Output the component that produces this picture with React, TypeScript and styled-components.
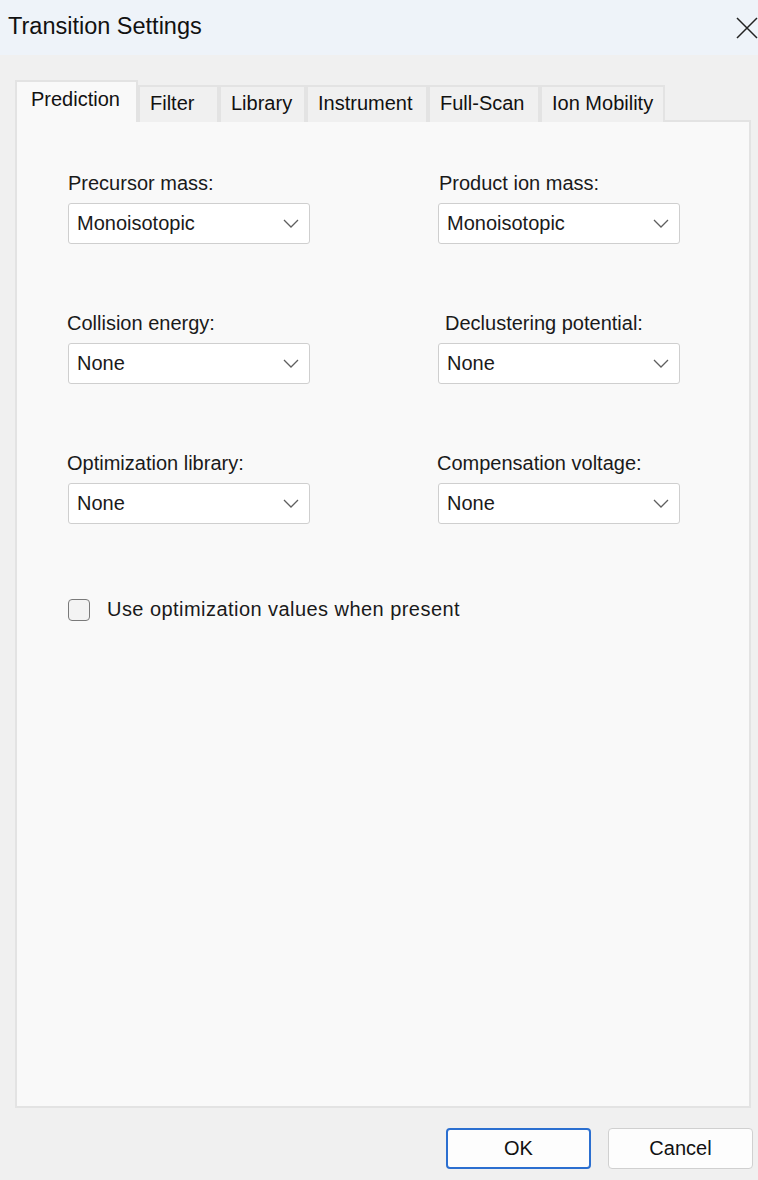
import styled, { createGlobalStyle } from 'styled-components';

const GlobalStyle = createGlobalStyle`
	html, body {
		margin: 0;
		padding: 0;
		background: #f0f0f0;
	}
	body {
		font-family: "Liberation Sans", Arial, sans-serif;
		color: #1a1a1a;
	}
`

const tabs = [
	{label: 'Prediction', width: 123},
	{label: 'Filter', width: 81},
	{label: 'Library', width: 87},
	{label: 'Instrument', width: 122},
	{label: 'Full-Scan', width: 112},
	{label: 'Ion Mobility', width: 125},
]

const fields = [
	{label: 'Precursor mass:', value: 'Monoisotopic', shift: 0},
	{label: 'Product ion mass:', value: 'Monoisotopic', shift: 1},
	{label: 'Collision energy:', value: 'None', shift: -1},
	{label: 'Declustering potential:', value: 'None', shift: 7},
	{label: 'Optimization library:', value: 'None', shift: -1},
	{label: 'Compensation voltage:', value: 'None', shift: -1},
]

const Window = styled.div`
	width: 758px;
	height: 1180px;
	display: flex;
	flex-direction: column;
	background: #f0f0f0;
	overflow: hidden;
`

const TitleBar = styled.div`
	height: 55px;
	flex: none;
	display: flex;
	align-items: center;
	justify-content: space-between;
	padding: 0 0 2px 8px;
	box-sizing: border-box;
	background: #eef3f9;
`

const Title = styled.span`
	font-size: 23.5px;
	color: #111;
`

const CloseButton = styled.button`
	width: 40px;
	height: 55px;
	border: none;
	background: transparent;
	padding: 0 0 0 18px;
	display: flex;
	align-items: center;
	margin-top: 2px;
`

const Body = styled.div`
	flex: 1;
	display: flex;
	flex-direction: column;
	padding: 25px 7px 0 15px;
	min-height: 0;
`

const TabStrip = styled.div`
	display: flex;
	align-items: flex-end;
	height: 42px;
	margin-bottom: -2px;
	position: relative;
	z-index: 1;
`

const Tab = styled.div<{ $active?: boolean; $width: number }>`
	box-sizing: border-box;
	width: ${p => p.$width}px;
	height: ${p => (p.$active ? 42 : 37)}px;
	border: 2px solid #e3e3e3;
	border-bottom: none;
	background: ${p => (p.$active ? '#f9f9f9' : '#f0f0f0')};
	font-size: 20px;
	padding: ${p => (p.$active ? '6px 0 0 14px' : '5px 0 0 10px')};
	white-space: nowrap;
	color: #111;
`

const Panel = styled.div`
	flex: 1;
	background: #f9f9f9;
	border: 2px solid #e3e3e3;
	padding: 50px 0 0 51px;
`

const FieldGrid = styled.div`
	display: grid;
	grid-template-columns: 242px 242px;
	column-gap: 128px;
	row-gap: 68px;
`

const Field = styled.div`
	display: flex;
	flex-direction: column;
	gap: 8px;
`

const FieldLabel = styled.label<{ $shift: number }>`
	font-size: 20px;
	line-height: 23px;
	margin-left: ${p => p.$shift}px;
	white-space: nowrap;
`

const Select = styled.div`
	height: 41px;
	box-sizing: border-box;
	border: 1.5px solid #cfcfcf;
	border-radius: 3px;
	background: #fff;
	display: flex;
	align-items: center;
	justify-content: space-between;
	padding: 0 10px 0 8px;
	font-size: 20px;
`

const CheckRow = styled.label`
	display: flex;
	align-items: center;
	gap: 17px;
	margin-top: 74px;
	font-size: 20px;
	letter-spacing: 0.45px;
`

const CheckBox = styled.span`
	width: 22px;
	height: 22px;
	box-sizing: border-box;
	border: 1.5px solid #7a7a7a;
	border-radius: 4px;
	background: #f3f3f3;
`

const Footer = styled.div`
	height: 72px;
	flex: none;
	display: flex;
	justify-content: flex-end;
	align-items: flex-start;
	gap: 17px;
	padding-top: 20px;
	margin-right: -2px;
	box-sizing: border-box;
`

const Button = styled.button<{ $primary?: boolean }>`
	width: 145px;
	height: 41px;
	box-sizing: border-box;
	border-radius: 4px;
	background: #fdfdfd;
	border: ${p => (p.$primary ? '2px solid #2b6fd0' : '1.5px solid #d0d0d0')};
	font-family: "Liberation Sans", Arial, sans-serif;
	font-size: 20px;
	color: #111;
`

const Chevron = () => (
	<svg width="16" height="9" viewBox="0 0 16 9" fill="none">
		<path d="M1 1 L8 8 L15 1" stroke="#5f5f5f" strokeWidth="1.3" />
	</svg>
)

const CloseIcon = () => (
	<svg width="22" height="22" viewBox="0 0 22 22" fill="none">
		<path d="M1 1 L21 21 M21 1 L1 21" stroke="#222" strokeWidth="1.5" />
	</svg>
)

export default function App() {
	return (
		<>
			<GlobalStyle/>
			<Window>
				<TitleBar>
					<Title>Transition Settings</Title>
					<CloseButton><CloseIcon/></CloseButton>
				</TitleBar>
				<Body>
					<TabStrip>
						{tabs.map(({label, width}, index) => (
							<Tab key={label} $active={index === 0} $width={width}>{label}</Tab>
						))}
					</TabStrip>
					<Panel>
						<FieldGrid>
							{fields.map(({label, value, shift}) => (
								<Field key={label}>
									<FieldLabel $shift={shift}>{label}</FieldLabel>
									<Select>
										<span>{value}</span>
										<Chevron/>
									</Select>
								</Field>
							))}
						</FieldGrid>
						<CheckRow>
							<CheckBox/>
							<span>Use optimization values when present</span>
						</CheckRow>
					</Panel>
					<Footer>
						<Button $primary>OK</Button>
						<Button>Cancel</Button>
					</Footer>
				</Body>
			</Window>
		</>
	);
}
